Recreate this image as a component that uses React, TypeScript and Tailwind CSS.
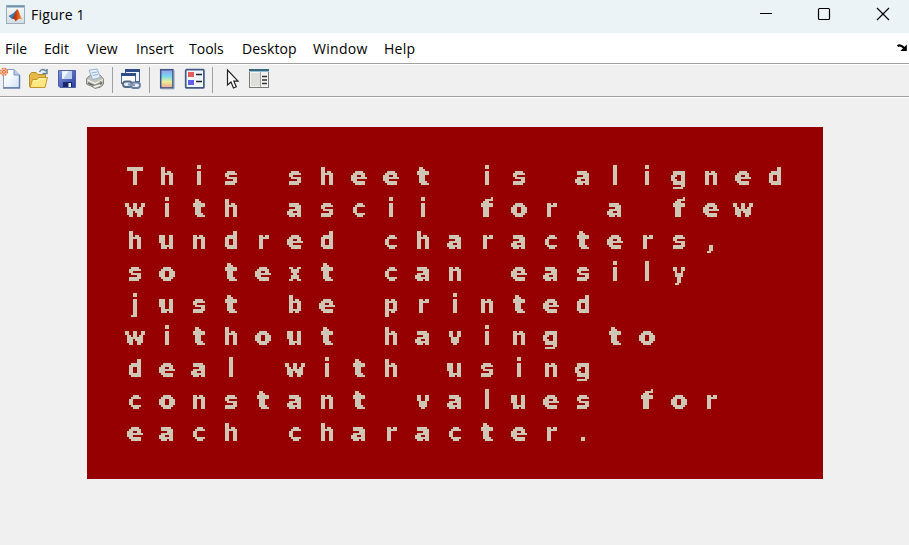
import React from "react";

const lines = [
  "This sheet is aligned",
  "with ascii for a few",
  "hundred characters,",
  "so text can easily",
  "just be printed",
  "without having to",
  "deal with using",
  "constant values for",
  "each character.",
];

const glyphScale: Record<string, string> = {
  h: "scale-x-[0.87]",
  n: "scale-x-[0.87]",
  d: "scale-x-[0.87]",
  b: "scale-x-[0.87]",
  p: "scale-x-[0.87]",
  c: "scale-x-[0.9]",
  w: "scale-x-[0.92]",
  v: "scale-x-[0.9]",
  x: "scale-x-[0.8]",
  y: "scale-x-[0.8]",
  T: "scale-x-[0.95]",
  t: "scale-x-[1.1]",
  f: "scale-x-[1.15]",
};

const menus = [
  { label: "File", cls: "w-[39px]" },
  { label: "Edit", cls: "w-[43px]" },
  { label: "View", cls: "w-[49px]" },
  { label: "Insert", cls: "w-[53px]" },
  { label: "Tools", cls: "w-[53px]" },
  { label: "Desktop", cls: "w-[71px] tracking-[0.1px]" },
  { label: "Window", cls: "w-[71px] tracking-[0.3px]" },
  { label: "Help", cls: "w-[40px] tracking-[0.3px]" },
];

function MatlabIcon() {
  return (
    <svg className="block h-5 w-5" viewBox="0 0 20 20">
      <defs>
        <linearGradient id="frame" x2="0" y2="1">
          <stop stopColor="#f8fafb" />
          <stop offset="1" stopColor="#d3dde5" />
        </linearGradient>
        <linearGradient id="peak" x2="1">
          <stop stopColor="#7a2212" />
          <stop offset=".5" stopColor="#d84a14" />
          <stop offset="1" stopColor="#f7a53a" />
        </linearGradient>
      </defs>
      <rect x=".5" y=".5" width="18" height="18" fill="url(#frame)" stroke="#9badbb" />
      <path d="M1 1.5H18" stroke="#6f94b0" strokeWidth="2" />
      <path d="M2.5 11L7 8.5 11 4.5 9.5 12 6 14Z" fill="#3e79ab" />
      <path d="M6 13.5C8.5 12 9 6 11.2 4.2 13 5 14 11.5 16.5 14.5 13 12.5 11.5 15 9.5 16.5 9 14.5 8 13.5 6 13.5Z" fill="url(#peak)" />
    </svg>
  );
}

function NewIcon() {
  return (
    <svg className="block h-6 w-6" viewBox="0 0 24 24">
      <defs>
        <linearGradient id="paper" x2="1" y2="1">
          <stop offset=".3" stopColor="#fff" />
          <stop offset="1" stopColor="#cfe0f7" />
        </linearGradient>
      </defs>
      <path d="M4.5 2.5H15L20.5 8V20.5H4.5Z" fill="url(#paper)" stroke="#8ba0c8" />
      <path d="M15 2.5V8H20.5" fill="#b9cdea" stroke="#7f96be" />
      <path d="M20.5 8V21H4" fill="none" stroke="#627da9" strokeWidth="1.4" />
      <circle cx="5" cy="4.8" r="3.4" fill="#f6cdb5" stroke="#ec7442" strokeWidth="1.4" strokeDasharray="1.7 1" />
      <circle cx="5" cy="4.8" r="1.5" fill="#ffc48f" stroke="#e66b39" />
    </svg>
  );
}

function OpenIcon() {
  return (
    <svg className="block h-6 w-6" viewBox="0 0 24 24">
      <path d="M2.5 19.5V8L4.5 5.5H9L11 7.5H18.5V19Z" fill="#e5b848" stroke="#b98b23" />
      <path d="M3 20.5L5.5 12.5H10L11.5 10.5H20.5L18 20.5Z" fill="#ffe781" stroke="#c69728" />
      <path d="M6.5 13.8H11L12.5 11.8H18.5" fill="none" stroke="#fff8ba" />
      <path d="M12.5 5C14 2 17 1.5 19 4.3M20 2V6.5H15.5" fill="none" stroke="#6484a0" strokeWidth="1.5" />
    </svg>
  );
}

function SaveIcon() {
  return (
    <svg className="block h-6 w-6" viewBox="0 0 24 24">
      <defs>
        <linearGradient id="disk" x2="1" y2="1">
          <stop stopColor="#8094df" />
          <stop offset="1" stopColor="#293f9f" />
        </linearGradient>
      </defs>
      <path d="M3.5 3.5H20.5V20.5H5L3.5 19Z" fill="url(#disk)" stroke="#4d5ca6" />
      <path d="M7 4H17V12H7Z" fill="#eef4fc" />
      <path d="M14 4H17V12H8Z" fill="#bdd1ed" />
      <path d="M8 15H17V20H8Z" fill="#19266a" />
      <path d="M13.5 16H16V20H13.5Z" fill="#fff" />
    </svg>
  );
}

function PrintIcon() {
  return (
    <svg className="block h-6 w-6" viewBox="0 0 24 24">
      <path d="M5 10L8 8H17L20.5 12V17L17 20.5L12 21L3.5 17V12Z" fill="#c2c2bc" stroke="#85857f" />
      <path d="M6 3.2L14 2L17.5 10.5L9.5 12.5Z" fill="#e3efff" stroke="#9aafc8" />
      <path d="M8.5 6L14 5M9.5 8.5L15 7.5" stroke="#96b2d2" />
      <path d="M4.5 13L12 16.5L20 12.5" fill="none" stroke="#f4f4ee" strokeWidth="1.3" />
      <path d="M5 16L12 19L19 15.5" fill="none" stroke="#686863" strokeWidth="1.8" />
      <path d="M9 19L16.5 16.8L19.5 18.5L12 21.5Z" fill="#eeeeea" stroke="#8a8a83" />
      <circle cx="17.5" cy="14.6" r=".8" fill="#66b653" />
    </svg>
  );
}

function LinkIcon() {
  return (
    <svg className="block h-6 w-6" viewBox="0 0 24 24">
      <rect x="6.5" y="2.5" width="14" height="12" fill="#edf3fa" stroke="#425e91" />
      <path d="M6 3.5H21" stroke="#2e4d88" strokeWidth="3" />
      <rect x="2.5" y="6.5" width="14" height="10" fill="#fff" stroke="#48669c" />
      <path d="M2 7.5H17" stroke="#2e4d88" strokeWidth="3" />
      <rect x="4" y="14.5" width="9" height="5.5" rx="2.7" fill="#e8eef6" stroke="#526887" strokeWidth="1.8" />
      <rect x="12" y="15.5" width="9" height="5.5" rx="2.7" fill="#e8eef6" stroke="#687d9d" strokeWidth="1.8" />
      <path d="M9 17.2L16 18.3" stroke="#8298b5" strokeWidth="2" />
    </svg>
  );
}

function ColorbarIcon() {
  return (
    <svg className="block h-6 w-6" viewBox="0 0 24 24">
      <defs>
        <linearGradient id="spectrum" x2="0" y2="1">
          <stop stopColor="#9c95ed" />
          <stop offset=".35" stopColor="#75d9ee" />
          <stop offset=".65" stopColor="#e6ef9a" />
          <stop offset="1" stopColor="#f7a38d" />
        </linearGradient>
      </defs>
      <rect x="5.7" y="2.7" width="12.2" height="18.2" fill="url(#spectrum)" stroke="#3b5689" strokeWidth="1.5" />
      <path d="M19 3.5V21.8H6" fill="none" stroke="#8592ab" />
    </svg>
  );
}

function LegendIcon() {
  return (
    <svg className="block h-6 w-6" viewBox="0 0 24 24">
      <rect x="2.7" y="2.7" width="18.2" height="18.2" rx="1" fill="#f1f5fc" stroke="#405986" strokeWidth="1.7" />
      <rect x="5" y="5" width="6" height="5" fill="#e45d5d" />
      <rect x="5" y="13" width="6" height="5" fill="#615fe7" />
      <path d="M13 7.5H19M13 14.5H19" stroke="#222" strokeWidth="1.3" />
    </svg>
  );
}

function PointerIcon() {
  return (
    <svg className="block h-6 w-6" viewBox="0 0 24 24">
      <path d="M6.5 3V18L10 15L12.5 21L15.3 19.8L12.8 14.2H17Z" fill="#fff" stroke="#222" strokeWidth="1.2" />
    </svg>
  );
}

function InspectorIcon() {
  return (
    <svg className="block h-6 w-6" viewBox="0 0 24 24">
      <rect x="2.5" y="2.5" width="19" height="18" fill="#f3f3f1" stroke="#797979" />
      <path d="M2 3H22" stroke="#386780" strokeWidth="2" />
      <path d="M2 4.5H22" stroke="#91bed1" />
      <rect x="4" y="6" width="9" height="13" fill="#dededb" />
      <path d="M13.5 5V20" stroke="#a5a5a5" />
      <path d="M15 9.5H20M15 13H20M15 16.5H20" stroke="#333" strokeWidth="1.5" />
    </svg>
  );
}

// Averages each 2px block of the text and snaps it to fully on or off.
function PixelFilter() {
  return (
    <svg className="absolute h-0 w-0" aria-hidden="true">
      <filter id="pixelate" x="0" y="0" width="1" height="1" colorInterpolationFilters="sRGB">
        <feConvolveMatrix in="SourceGraphic" order="2" kernelMatrix="1 1 1 1" divisor="4" targetX="0" targetY="0" edgeMode="none" preserveAlpha="false" result="avg" />
        <feFlood x="0" y="0" width="1" height="1" floodColor="#000" result="dot" />
        <feComposite in="dot" in2="dot" operator="over" x="0" y="0" width="2" height="2" result="cell" />
        <feTile in="cell" result="grid" />
        <feComposite in="avg" in2="grid" operator="in" result="p0" />
        <feOffset in="p0" dx="1" dy="0" result="p1" />
        <feMerge result="row">
          <feMergeNode in="p0" />
          <feMergeNode in="p1" />
        </feMerge>
        <feOffset in="row" dx="0" dy="1" result="row2" />
        <feMerge result="blocks">
          <feMergeNode in="row" />
          <feMergeNode in="row2" />
        </feMerge>
        <feComponentTransfer in="blocks" result="mask">
          <feFuncA type="discrete" tableValues="0 1" />
        </feComponentTransfer>
        <feFlood floodColor="#d0c6b6" result="ink" />
        <feComposite in="ink" in2="mask" operator="in" />
      </filter>
    </svg>
  );
}

const Divider = () => <span className="mt-[3px] h-[26px] w-px shrink-0 bg-[#a0a0a0]" />;

export default function App() {
  return (
    <div className="flex h-[545px] w-[909px] flex-col overflow-hidden bg-[#f0f0f0] font-['Open_Sans','Noto_Sans',sans-serif] text-black">
      <header className="flex h-[33px] shrink-0 items-start bg-[#ebf3f7]">
        <div className="ml-1.5 mt-[5px]"><MatlabIcon /></div>
        <span className="ml-[5px] mt-1 text-[14px] leading-[22px] tracking-[0.2px]">Figure 1</span>
        <svg className="ml-auto block h-7 w-[159px]" viewBox="0 0 159 28" fill="none" stroke="#000">
          <path d="M10 13.5H22" />
          <rect x="68.5" y="8.5" width="11" height="11" rx="1" strokeWidth="1.2" />
          <path d="M127 8L139 20M139 8L127 20" strokeWidth="1.2" />
        </svg>
      </header>
      <nav className="flex h-[30px] shrink-0 items-center bg-white pl-[5px] text-[14px]">
        {menus.map((m) => (
          <span key={m.label} className={`${m.cls} shrink-0 whitespace-nowrap pt-0.5 leading-[28px]`}>{m.label}</span>
        ))}
        <svg className="ml-auto mr-px block h-[9px] w-[11px]" viewBox="0 0 11 9">
          <path d="M.5 2.2C3 .4 5 1.4 7.5 4.5" fill="none" stroke="#000" strokeWidth="2.2" />
          <path d="M9.8 .5V7H3.3Z" fill="#000" />
        </svg>
      </nav>
      <div className="flex h-[34px] shrink-0 border-b border-t border-b-[#a0a0a0] border-t-[#a0a0a0] bg-[#f0f0f0] shadow-[inset_0_1px_0_#fff,0_1px_0_#fff]">
        <div className="-ml-px mt-[3px] flex w-[113px] gap-1"><NewIcon /><OpenIcon /><SaveIcon /><PrintIcon /></div>
        <Divider />
        <div className="ml-[6px] mt-[3px] w-[30px]"><LinkIcon /></div>
        <Divider />
        <div className="ml-[5px] mt-[3px] flex w-[57px] gap-1"><ColorbarIcon /><LegendIcon /></div>
        <Divider />
        <div className="ml-2 mt-[3px] flex gap-[2px]"><PointerIcon /><InspectorIcon /></div>
      </div>
      <main className="ml-[87px] mt-[30px] h-[352px] w-[736px] bg-[#960000] p-8 font-['DejaVu_Sans',sans-serif] text-[25px] font-bold text-[#d0c6b6]">
        <PixelFilter />
        <div className="h-[288px] w-[672px] [filter:url(#pixelate)]">
          {lines.map((line) => (
            <div key={line} className="flex h-8">
              {line.split("").map((ch, i) => (
                <span key={i} className={`w-8 shrink-0 whitespace-pre text-center leading-[35px] ${glyphScale[ch] ?? ""}`}>{ch}</span>
              ))}
            </div>
          ))}
        </div>
      </main>
    </div>
  );
}
